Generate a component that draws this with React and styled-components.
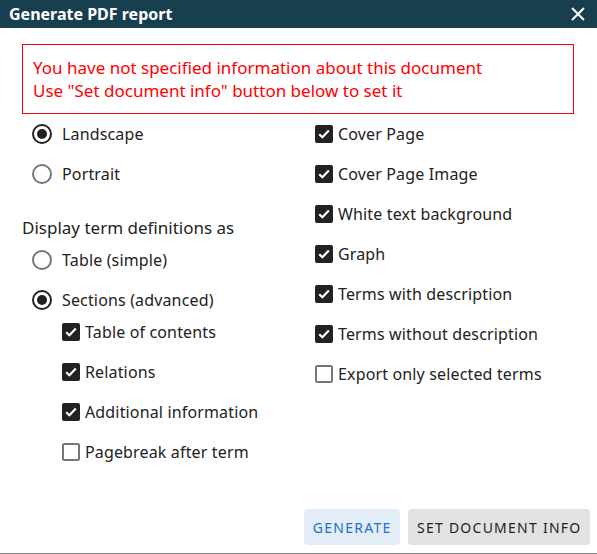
import React, { useState } from "react";
import styled, { createGlobalStyle } from "styled-components";

const GlobalStyle = createGlobalStyle`
  html, body, #root {
    margin: 0;
    height: 100%;
  }
  body {
    font-family: "Noto Sans", "Open Sans", sans-serif;
    color: #222;
    background: #fff;
  }
`;

const Dialog = styled.div`
  height: 554px;
  box-sizing: border-box;
  display: flex;
  flex-direction: column;
  border-bottom: 1px solid #808080;
`;

const Header = styled.div`
  height: 28px;
  background: #173f4d;
  color: #fff;
  display: flex;
  align-items: center;
  justify-content: space-between;
  padding: 0 12px 0 9px;
  font-size: 16px;
  font-weight: 700;
`;

const CloseButton = styled.button`
  border: 0;
  background: none;
  padding: 0;
  color: #fff;
  display: flex;
  cursor: pointer;
`;

const Body = styled.div`
  padding: 16px 23px 0 22px;
`;

const ErrorBox = styled.div`
  border: 1px solid #f00;
  color: #f00;
  font-size: 17px;
  line-height: 23px;
  padding: 11px 10px 11px;
`;

const Columns = styled.div`
  display: grid;
  grid-template-columns: 283px 1fr;
`;

const Column = styled.div`
  display: flex;
  flex-direction: column;
`;

const Row = styled.label`
  height: 40px;
  display: flex;
  align-items: center;
  gap: ${(p) => p.$gap || 5}px;
  padding-left: ${(p) => p.$indent || 0}px;
  font-size: 16px;
  letter-spacing: 0.15px;
  cursor: pointer;
`;

const SectionTitle = styled.div`
  font-size: 17px;
  line-height: 24px;
  margin-top: 22px;
`;

const Nested = styled.div`
  margin-top: -8px;
`;

const RadioCircle = styled.span`
  width: 20px;
  height: 20px;
  box-sizing: border-box;
  border-radius: 50%;
  border: 2px solid ${(p) => (p.$on ? "#222" : "#777")};
  display: flex;
  align-items: center;
  justify-content: center;
  &::after {
    content: "";
    width: 10px;
    height: 10px;
    border-radius: 50%;
    background: #222;
    display: ${(p) => (p.$on ? "block" : "none")};
  }
`;

const Box = styled.span`
  width: 18px;
  height: 18px;
  box-sizing: border-box;
  border-radius: 2px;
  border: 2px solid ${(p) => (p.$on ? "#222" : "#777")};
  background: ${(p) => (p.$on ? "#222" : "#fff")};
  display: flex;
  align-items: center;
  justify-content: center;
  flex-shrink: 0;
`;

const Footer = styled.div`
  margin-top: auto;
  display: flex;
  justify-content: flex-end;
  gap: 8px;
  padding: 0 7px 8px 0;
`;

const Button = styled.button`
  height: 36px;
  border: 0;
  border-radius: 4px;
  padding: 0 ${(p) => (p.$primary ? 9 : 8.5)}px;
  font-family: "Noto Sans", sans-serif;
  font-size: 14px;
  letter-spacing: 1.25px;
  text-transform: uppercase;
  background: ${(p) => (p.$primary ? "#e3edf8" : "#e2e2e2")};
  color: ${(p) => (p.$primary ? "#1f6fcf" : "#222")};
  cursor: pointer;
`;

function Radio({ checked, label, onChange }) {
  return (
    <Row $gap={10} $indent={10} onClick={onChange}>
      <RadioCircle $on={checked} />
      {label}
    </Row>
  );
}

function Check({ checked, label, indent, onChange }) {
  return (
    <Row $indent={indent} onClick={onChange}>
      <Box $on={checked}>
        {checked && (
          <svg width="12" height="10" viewBox="0 0 12 10">
            <path d="M1.2 5.2 L4.4 8.2 L10.8 1.6" fill="none" stroke="#fff" strokeWidth="2.2" />
          </svg>
        )}
      </Box>
      {label}
    </Row>
  );
}

const nestedOptions = [
  ["toc", "Table of contents", true],
  ["relations", "Relations", true],
  ["additional", "Additional information", true],
  ["pagebreak", "Pagebreak after term", false],
];

const rightOptions = [
  ["cover", "Cover Page", true],
  ["coverImage", "Cover Page Image", true],
  ["whiteBg", "White text background", true],
  ["graph", "Graph", true],
  ["withDesc", "Terms with description", true],
  ["withoutDesc", "Terms without description", true],
  ["selected", "Export only selected terms", false],
];

export default function App() {
  const [orientation, setOrientation] = useState("landscape");
  const [mode, setMode] = useState("sections");
  const [checks, setChecks] = useState(() => {
    const init = {};
    [...nestedOptions, ...rightOptions].forEach(([k, , v]) => (init[k] = v));
    return init;
  });
  const toggle = (k) => setChecks((c) => ({ ...c, [k]: !c[k] }));

  return (
    <>
      <GlobalStyle />
      <Dialog>
        <Header>
          Generate PDF report
          <CloseButton aria-label="close">
            <svg width="14" height="14" viewBox="0 0 14 14">
              <path d="M1 1 L13 13 M13 1 L1 13" stroke="#fff" strokeWidth="2" />
            </svg>
          </CloseButton>
        </Header>
        <Body>
          <ErrorBox>
            You have not specified information about this document
            <br />
            Use "Set document info" button below to set it
          </ErrorBox>
          <Columns>
            <Column>
              <Radio label="Landscape" checked={orientation === "landscape"} onChange={() => setOrientation("landscape")} />
              <Radio label="Portrait" checked={orientation === "portrait"} onChange={() => setOrientation("portrait")} />
              <SectionTitle>Display term definitions as</SectionTitle>
              <Radio label="Table (simple)" checked={mode === "table"} onChange={() => setMode("table")} />
              <Radio label="Sections (advanced)" checked={mode === "sections"} onChange={() => setMode("sections")} />
              <Nested>
                {nestedOptions.map(([k, label]) => (
                  <Check key={k} indent={40} label={label} checked={checks[k]} onChange={() => toggle(k)} />
                ))}
              </Nested>
            </Column>
            <Column>
              {rightOptions.map(([k, label]) => (
                <Check key={k} indent={10} label={label} checked={checks[k]} onChange={() => toggle(k)} />
              ))}
            </Column>
          </Columns>
        </Body>
        <Footer>
          <Button $primary>Generate</Button>
          <Button>Set document info</Button>
        </Footer>
      </Dialog>
    </>
  );
}
